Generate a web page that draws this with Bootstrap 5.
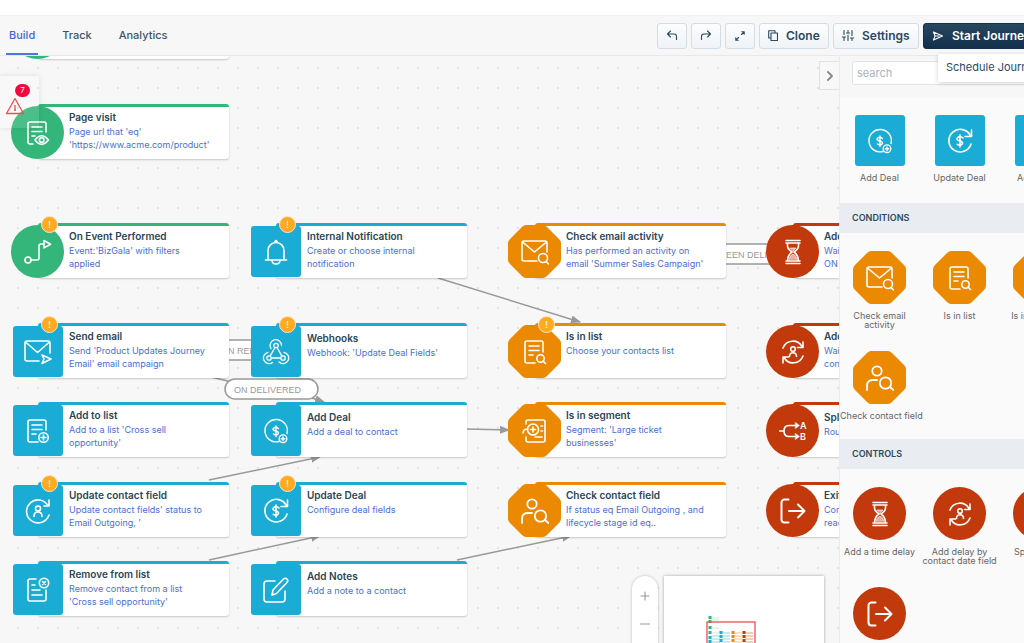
<!DOCTYPE html>
<html lang="en">
<head>
<meta charset="utf-8">
<meta name="viewport" content="width=device-width, initial-scale=1">
<title>Journey builder</title>
<link href="https://cdn.jsdelivr.net/npm/bootstrap@5.3.0/dist/css/bootstrap.min.css" rel="stylesheet">
<style>
:root{--green:#34b67a;--teal:#1bacd5;--orange:#ec8903;--red:#c23a0b;--ink:#2b4a60;--link:#4a6fd6;--rule:#e6e8ea}
body{font-family:Inter,"Liberation Sans",sans-serif;font-size:11px;color:var(--ink);background:#fff;overflow:hidden}
.shell{width:calc(100% + 56px)}
.strip{height:16px;border-bottom:1px solid #f0f1f2}
.topbar{height:40px;background:#f7f7f7;border-bottom:1px solid var(--rule);padding:0 12px 0 6px}
.tabs{gap:21px}
.tabs a{color:#3c5568;font-weight:500;line-height:39px;padding:0 3px;text-decoration:none}
.tabs a.active{color:#4169d6;box-shadow:inset 0 -2px #4f74da}
.tool{height:26px;padding:0 8px;font-size:12px;font-weight:600;line-height:14px;color:var(--ink);border:1px solid #d5dde4;border-radius:3px;background:linear-gradient(#fdfdfe,#eff3f7)}
.tool-icon{padding:0;width:30px;justify-content:center}
.tool.clone{width:70px}.tool.settings{width:86px}
.tool.start{width:145px;color:#fff;background:linear-gradient(#27475f,#12304a);border-color:#12304a}
.line-icon{fill:none;stroke:currentColor;stroke-width:1.1;stroke-linecap:round;stroke-linejoin:round;flex:none}
.schedule{position:absolute;top:31px;left:15px;z-index:30;width:130px;height:28px;padding:0 8px;border:0;background:#fff;border-radius:2px;box-shadow:0 1px 5px rgba(0,0,0,.18);color:var(--ink);text-align:left;white-space:nowrap;font-size:11px}
.board{background:#f7f7f7 radial-gradient(circle at 10px 10px,#e0e2e4 0 1px,transparent 1px) 8px 2px/20px 20px}
.edges{position:absolute;inset:0;width:100%;height:100%;stroke:#999;stroke-width:1.5;fill:none}
.edges text{fill:#999;stroke:none;font:9px "Liberation Sans",sans-serif}
.node{position:absolute;width:191px;height:55px;padding:3px 6px 0 31px;background:#fff;border-top:3px solid var(--tone);border-radius:3px;box-shadow:0 1px 2px rgba(0,0,0,.2)}
.node.short{padding-top:5px}
.node h2{font-size:10px;line-height:15px;font-weight:600;margin:0;color:#2b4558}
.node p{font-size:9px;line-height:13px;margin:0;color:var(--link);white-space:pre}
.shape{width:53px;height:53px;color:#fff;background:var(--tone);flex:none}
.node .shape{position:absolute;left:-27px;top:-1px}
.shape.circle{border-radius:50%}
.shape.square{width:50px;height:51px;border-radius:3px}
.node .shape.square{left:-25px;top:0}
.shape.octagon{clip-path:path("M18 0H35q2 0 4 2L51 14q2 2 2 4V35q0 2-2 4L39 51q-2 2-4 2H18q-2 0-4-2L2 39q-2-2-2-4V18q0-2 2-4L14 2q2-2 4-2z")}
.shape svg{width:28px;height:28px;fill:none;stroke:#fff;stroke-width:1.6;stroke-linecap:round;stroke-linejoin:round}
.green{--tone:var(--green)}.teal{--tone:var(--teal)}.orange{--tone:var(--orange)}.red{--tone:var(--red)}
.warn{position:absolute;left:3px;top:-10px;width:17px;height:17px;border-radius:50%;background:#ffaa20;border:1px solid #f7e6c8;color:#fff;font-size:9px;line-height:15px;text-align:center}
.alerts{position:absolute;left:0;top:20px;width:39px;height:52px;padding:0;border:0;background:rgba(255,255,255,.12);box-shadow:0 0 6px rgba(0,0,0,.1);z-index:5}
.alerts svg{position:absolute;left:5px;top:21px}
.count{position:absolute;left:15px;top:8px;width:15px;height:13px;border-radius:7px;background:#ee0a3c;color:#fff;font-size:8px;line-height:13px}
.collapse-btn{position:absolute;right:0;top:5px;width:20px;height:29px;padding:0;border:1px solid #e2e2e2;border-width:1px 0 1px 1px;background:#f8f8f8;color:#888;z-index:5}
.corner{position:absolute;right:15px;bottom:-40px;height:107px;gap:6px;z-index:5}
.zoomer{width:26px;border-radius:13px;background:#fff;box-shadow:0 0 3px rgba(0,0,0,.25);padding-top:5px}
.zoomer button{width:26px;height:28px;padding:0;border:0;background:none;color:#999}
.minimap{width:160px;background:#fff;box-shadow:0 0 3px rgba(0,0,0,.35)}
.palette{width:241px;background:#fafafa;border-left:1px solid #e9ebed;flex:none}
.finder{height:41px;padding:5px 12px 0;background:#f7f7f7}
.finder input{height:24px;font-size:11px;padding:0 4px;border:1px solid #dfe3e6;border-radius:2px}
.finder input::placeholder{color:#a9b3bb}
.group-title{height:30px;line-height:30px;margin:0;padding:0 12px;font-size:9px;font-weight:600;background:#e9edf2}
.tiles{display:grid;grid-template-columns:repeat(3,79px);grid-auto-rows:88px;gap:12px 1px;padding-top:18px}
.tile{border:0;background:none;padding:0;font-size:9px;line-height:9px;color:#666;white-space:pre;align-items:safe center}
.tile span + span{margin-top:7px}
</style>
</head>
<body>
<svg class="d-none" aria-hidden="true">
<symbol id="page" viewBox="0 0 28 28"><path d="M22 13V5a2 2 0 0 0-2-2H6a2 2 0 0 0-2 2v18a2 2 0 0 0 2 2h3M8 8h10M8 12.500h10M8 17h3M11 21q6.500-8.500 13.500 0q-7 8.500-13.500 0z"/><circle cx="17.700" cy="21" r="2.300"/></symbol>
<symbol id="event" viewBox="0 0 28 28"><circle cx="4" cy="22" r="3"/><path d="M7 22h6q2 0 2-2V8q0-2 2-2h3M20 2.500l6.500 3.700-6.500 3.700z"/></symbol>
<symbol id="send" viewBox="0 0 28 28"><path d="M15 23H3a2 2 0 0 1-2-2V5a2 2 0 0 1 2-2h21a2 2 0 0 1 2 2v10M1.500 4L13.500 14.500 25.500 4M18 17l9 4-9 4.500 2-4.500z"/></symbol>
<symbol id="listadd" viewBox="0 0 28 28"><path d="M22 13V5a2 2 0 0 0-2-2H6a2 2 0 0 0-2 2v18a2 2 0 0 0 2 2h8M8 8h10M8 12.500h10M8 17h4M19.500 18v5M17 20.500h5"/><circle cx="19.500" cy="20.500" r="4.700"/></symbol>
<symbol id="listdel" viewBox="0 0 28 28"><path d="M12 3H6a2 2 0 0 0-2 2v18a2 2 0 0 0 2 2h14a2 2 0 0 0 2-2v-9M8 9h3M8 14h8M8 19h10M18.500 5.500l3 3M21.500 5.500l-3 3"/><circle cx="20" cy="7" r="4.700"/></symbol>
<symbol id="person-turn" viewBox="0 0 28 28"><path d="M25 18A11.500 11.500 0 1 1 24 8.500M25 3v6h-5M10 19.500c0-6 8-6 8 0"/><circle cx="14" cy="11.500" r="2.500"/></symbol>
<symbol id="bell" viewBox="0 0 28 28"><path d="M3.500 22h21M6 22V12.500a8 8 0 0 1 16 0V22M10 22q0 4 4 4t4-4M13 3.500q1-2 2 0"/></symbol>
<symbol id="hook" viewBox="0 0 28 28" stroke-width="1.300"><circle cx="14" cy="7.500" r="2.200"/><circle cx="7" cy="20" r="2.200"/><circle cx="21" cy="20" r="2.200"/><path d="M9.200 20h9.600M15 9.500l4.800 8.400M13 9.500l-4.800 8.400M9 10.500a5.700 5.700 0 1 1 10.500-3M10.500 24.500A5.700 5.700 0 1 1 6 14.300M22 14.300A5.700 5.700 0 1 1 17 24"/></symbol>
<symbol id="coin" viewBox="0 0 28 28" stroke-width="1.400"><path d="M17 24.500A11.200 11.200 0 1 1 25 16.500M16.500 11.500Q14 9.500 12 10.800t0 2.700l3 .8q2.700 1.500 .5 3.200-2 1-4-.5M14 9v10.500M21 20v3.500M19.200 21.700h3.600"/><circle cx="21" cy="21.700" r="3.800"/></symbol>
<symbol id="coin-turn" viewBox="0 0 28 28"><path d="M25 17A11.300 11.300 0 1 1 24.500 9M25.500 3v6.500H19M17 11Q14 8.500 12 10.300t0 3l3 .9q3 1.800 .3 3.600-2 1-4-.5M14 8v12"/></symbol>
<symbol id="edit" viewBox="0 0 28 28"><path d="M13 5H5a3 3 0 0 0-3 3v15a3 3 0 0 0 3 3h15a3 3 0 0 0 3-3v-8M10 19l1-5L21.500 3q2-1.500 3.500 0t0 3.500L14.500 17.500z"/></symbol>
<symbol id="mailfind" viewBox="0 0 28 28"><path d="M16 23H3a2 2 0 0 1-2-2V5a2 2 0 0 1 2-2h21a2 2 0 0 1 2 2v9M1.500 4L13.500 14 25.500 4M25 23.500l2.500 2.500"/><circle cx="22" cy="20" r="4.500"/></symbol>
<symbol id="listfind" viewBox="0 0 28 28"><path d="M22 14V5a2 2 0 0 0-2-2H6a2 2 0 0 0-2 2v18a2 2 0 0 0 2 2h8M8 8h10M8 12.500h10M8 17h4M22 23l2.500 2.500"/><circle cx="19.500" cy="20.500" r="3.700"/></symbol>
<symbol id="segment" viewBox="0 0 28 28"><path d="M5 7V5a2 2 0 0 1 2-2h15a2 2 0 0 1 2 2v18a2 2 0 0 1-2 2H7a2 2 0 0 1-2-2v-3M20 9h1.500M20 14h1.500M14 20h7M12 10v5M9.500 12.500h5M6.500 12.500q-4-1-4.500 3.500"/><circle cx="12" cy="12.500" r="5.500"/></symbol>
<symbol id="personfind" viewBox="0 0 28 28" stroke-width="1.800"><circle cx="11" cy="7" r="4.700"/><circle cx="19.500" cy="19" r="5.700"/><path d="M1 26v-4q0-6 6-6h4M24 23l3.500 3"/></symbol>
<symbol id="glass" viewBox="0 0 28 28"><path d="M7 2.500h14M7 5h14M7 23h14M7 25.500h14M8.500 5v3q0 3 4.500 6-4.500 3-4.500 9M19.500 5v3q0 3-4.500 6 4.500 3 4.500 9"/><path d="M11 10h6l-3 3zM10 21q1-4 4-5 3 1 4 5z" fill="#fff" fill-opacity=".6" stroke-width=".6"/></symbol>
<symbol id="person-loop" viewBox="0 0 28 28"><path d="M4 10A10.500 10.500 0 0 1 23 8.500M24 4v5.500h-5.500M24 18A10.500 10.500 0 0 1 5 19.500M4 25v-6h5.500M10.500 18.500c0-5 7-5 7 0"/><circle cx="14" cy="11" r="2.300"/></symbol>
<symbol id="split" viewBox="0 0 28 28"><path d="M0 14h5M18 8.500h-8q-5 0-5 5.500t5 5.500h8"/><path d="M16.500 5.500l4 3-4 3zM16.500 16.500l4 3-4 3z" fill="#fff" stroke-width=".5"/><text x="21" y="11.500" fill="#fff" stroke="none" font-size="9" font-weight="600">A</text><text x="21" y="23" fill="#fff" stroke="none" font-size="9" font-weight="600">B</text></symbol>
<symbol id="exit" viewBox="0 0 28 28" stroke-width="2"><path d="M9.500 2.500H5.500a3 3 0 0 0-3 3v17a3 3 0 0 0 3 3h4M10 14h15.500M19 7.500l6.500 6.500-6.500 6.500"/></symbol>
</svg>

<div class="shell vh-100 d-flex flex-column">
  <div class="strip flex-shrink-0"></div>
  <header class="topbar d-flex align-items-center justify-content-between flex-shrink-0">
    <nav class="tabs d-flex align-self-stretch" aria-label="Journey views">
      <a class="active" href="#build">Build</a><a href="#track">Track</a><a href="#analytics">Analytics</a>
    </nav>
    <div class="d-flex gap-1">
      <button class="tool tool-icon btn d-flex align-items-center" aria-label="Undo"><svg class="line-icon" width="12" height="12" viewBox="0 0 12 12"><path d="M4.500 1L1.500 4l3 3M1.500 4H8q2.500 0 2.500 2.500v3"/></svg></button>
      <button class="tool tool-icon btn d-flex align-items-center" aria-label="Redo"><svg class="line-icon" width="12" height="12" viewBox="0 0 12 12"><path d="M7.500 1l3 3-3 3M10.500 4H4Q1.500 4 1.500 6.500v3"/></svg></button>
      <button class="tool tool-icon btn d-flex align-items-center" aria-label="Full screen"><svg class="line-icon" width="12" height="12" viewBox="0 0 12 12"><path d="M7.500 4.500l2.500-2.500M7.800 1.800h2.400v2.400M4.500 7.500L2 10M1.800 7.800v2.400h2.400"/></svg></button>
      <button class="tool clone btn d-flex align-items-center gap-2"><svg class="line-icon" width="10" height="11" viewBox="0 0 10 11"><path d="M3 3h6.500v7.500H3zM3 8H.700V.700H7V3"/></svg>Clone</button>
      <button class="tool settings btn d-flex align-items-center gap-2"><svg class="line-icon" width="12" height="11" viewBox="0 0 12 11"><path d="M2 .500v4M2 7v3.500M.500 7h3M6 .500v2M6 5v5.500M4.500 3h3M10 .500v5M10 8v2.500M8.500 8h3"/></svg>Settings</button>
      <div class="position-relative">
        <button class="tool start btn d-flex align-items-center gap-2"><svg class="line-icon" width="12" height="12" viewBox="0 0 12 12"><path d="M1.500 2l9 4-9 4L3 6zM3 6h4"/></svg>Start Journey</button>
        <button class="schedule">Schedule Journey</button>
      </div>
    </div>
  </header>
  <div class="d-flex flex-grow-1 overflow-hidden">
    <main class="board position-relative overflow-hidden flex-grow-1" id="board">
      <svg class="edges" aria-hidden="true">
        <defs><marker id="tip" markerUnits="userSpaceOnUse" markerWidth="10" markerHeight="8" refX="9" refY="4" orient="auto"><path d="M0 0l10 4-10 4z" fill="#999" stroke="none"/></marker></defs>
        <g transform="translate(0 -56)">
          <g marker-end="url(#tip)"><path d="M438 278L580 322"/><path d="M300 394L324 402"/><path d="M209 480L320 457"/><path d="M209 560L320 536"/><path d="M467 429L509 430"/><path d="M457 560L571 536"/></g>
          <path d="M211 377L240 384"/>
          <g fill="#fff"><rect x="206" y="340" width="88" height="20" rx="10"/><rect x="700" y="244" width="110" height="20" rx="10"/><rect x="225" y="379" width="93" height="20" rx="10"/></g>
          <text x="221" y="354">ON REPLIED</text><text x="720" y="258">BEEN DELIVERED</text><text x="234" y="393">ON DELIVERED</text>
        </g>
      </svg>
      <button class="alerts" aria-label="Show warnings"><span class="count">7</span><svg width="20" height="19" viewBox="0 0 20 19" fill="none" stroke="#ee4f4f" stroke-width="1.300" stroke-linejoin="round"><path d="M10 1.500L18.500 16.500H1.500zM10 8v5M9 13h2"/></svg></button>
      <button class="collapse-btn" aria-label="Hide panel"><svg class="line-icon" width="8" height="10" viewBox="0 0 8 10"><path d="M2 1l4 4-4 4" stroke-width="1.800"/></svg></button>
      <div class="corner d-flex">
        <div class="zoomer d-flex flex-column">
          <button aria-label="Zoom in"><svg class="line-icon" width="10" height="10" viewBox="0 0 10 10"><path d="M1 5h8M5 1v8"/></svg></button>
          <button aria-label="Zoom out"><svg class="line-icon" width="10" height="10" viewBox="0 0 10 10"><path d="M0 5h10"/></svg></button>
          <button aria-label="Fit to screen"><svg class="line-icon" width="10" height="10" viewBox="0 0 10 10"><circle cx="5" cy="5" r="4"/></svg></button>
        </div>
        <div class="minimap">
          <svg width="160" height="107" viewBox="0 0 160 107" aria-hidden="true">
            <g stroke-width="1"><path stroke="#cfe9dc" d="M46 42h9M46 44h9M46 52h9M46 57h9"/><path stroke="#8fd4e8" d="M47 60h9M47 63h9M47 66h9M58 57h8M58 60h8M58 63h8M58 66h8"/><path stroke="#f5c583" d="M70 57h8M70 60h8M70 63h8M70 66h8"/><path stroke="#e09a80" d="M81 57h8M81 60h8M81 63h8M81 66h8"/></g>
            <g stroke-width="3" stroke-dasharray="3 1"><path stroke="#34b67a" d="M46 40v7M46 50v3M46 55v3"/><path stroke="#1bacd5" d="M46 60v8M57 55v13"/><path stroke="#ec8903" d="M69 55v13"/><path stroke="#c23a0b" d="M80 55v13"/></g>
            <rect x="43" y="46" width="48" height="35" fill="none" stroke="#ee4f4f" stroke-width="1.300"/>
          </svg>
        </div>
      </div>
    </main>
    <aside class="palette overflow-hidden">
      <div class="finder"><input class="form-control" type="search" placeholder="search" aria-label="Search steps"></div>
      <div class="tiles" id="actions"></div>
      <h2 class="group-title">CONDITIONS</h2>
      <div class="tiles" id="conditions"></div>
      <h2 class="group-title">CONTROLS</h2>
      <div class="tiles" id="controls"></div>
    </aside>
  </div>
</div>
<script src="https://cdn.jsdelivr.net/npm/bootstrap@5.3.0/dist/js/bootstrap.bundle.min.js"></script>
<script>
const shapes = { green: 'circle', teal: 'square', orange: 'octagon', red: 'circle' };
const shape = (tone, icon) =>
  `<span class="shape ${tone} ${shapes[tone]} d-flex align-items-center justify-content-center">${icon ? `<svg aria-hidden="true"><use href="#${icon}"/></svg>` : ''}</span>`;

// x, y, tone, icon, title, description, warning, extra class
const nodes = [
  [38, -52, 'green', '', '', '', 0],
  [38, 48, 'green', 'page', 'Page visit', "Page url that 'eq'\n'https://www.acme.com/product'", 0],
  [38, 167, 'green', 'event', 'On Event Performed', "Event:'BizGala' with filters\napplied", 1],
  [38, 267, 'teal', 'send', 'Send email', "Send 'Product Updates Journey\nEmail' email campaign", 1],
  [38, 346, 'teal', 'listadd', 'Add to list', "Add to a list 'Cross sell\nopportunity'", 0],
  [38, 426, 'teal', 'person-turn', 'Update contact field', "Update contact fields' status to\nEmail Outgoing, '", 1],
  [38, 505, 'teal', 'listdel', 'Remove from list', "Remove contact from a list\n'Cross sell opportunity'", 0],
  [276, 167, 'teal', 'bell', 'Internal Notification', 'Create or choose internal\nnotification', 1],
  [276, 267, 'teal', 'hook', 'Webhooks', "Webhook: 'Update Deal Fields'", 1, 'short'],
  [276, 346, 'teal', 'coin', 'Add Deal', 'Add a deal to contact', 0, 'short'],
  [276, 426, 'teal', 'coin-turn', 'Update Deal', 'Configure deal fields', 1],
  [276, 505, 'teal', 'edit', 'Add Notes', 'Add a note to a contact', 0, 'short'],
  [535, 167, 'orange', 'mailfind', 'Check email activity', "Has performed an activity on\nemail 'Summer Sales Campaign'", 0],
  [535, 267, 'orange', 'listfind', 'Is in list', 'Choose your contacts list', 1],
  [535, 346, 'orange', 'segment', 'Is in segment', "Segment: 'Large ticket\nbusinesses'", 0],
  [535, 426, 'orange', 'personfind', 'Check contact field', 'If status eq Email Outgoing , and\nlifecycle stage id eq..', 0],
  [793, 167, 'red', 'glass', 'Add a time delay', 'Wait until\nON', 0],
  [793, 267, 'red', 'person-loop', 'Add delay by date', 'Wait until\ncontact', 0],
  [793, 346, 'red', 'split', 'Split', 'Route', 0, 'short'],
  [793, 426, 'red', 'exit', 'Exit', 'Contact\nreaches', 0]
];
document.getElementById('board').insertAdjacentHTML('beforeend', nodes.map(([x, y, tone, icon, title, text, warn, extra = '']) =>
  `<article class="node ${tone} ${extra}" style="left:${x}px;top:${y}px">${shape(tone, icon)}${title ? `<h2>${title}</h2><p>${text}</p>` : ''}${warn ? '<span class="warn">!</span>' : ''}</article>`).join(''));

const palette = {
  actions: ['teal', [['coin', 'Add Deal'], ['coin-turn', 'Update Deal'], ['edit', 'Add Notes']]],
  conditions: ['orange', [['mailfind', 'Check email\nactivity'], ['listfind', 'Is in list'], ['segment', 'Is in segment'], ['personfind', 'Check contact field']]],
  controls: ['red', [['glass', 'Add a time delay'], ['person-loop', 'Add delay by\ncontact date field'], ['split', 'Split branch'], ['exit', 'Exit']]]
};
for (const [id, [tone, items]] of Object.entries(palette)) {
  document.getElementById(id).innerHTML = items.map(([icon, label]) =>
    `<button class="tile d-flex flex-column justify-content-start">${shape(tone, icon)}<span>${label}</span></button>`).join('');
}
</script>
</body>
</html>
